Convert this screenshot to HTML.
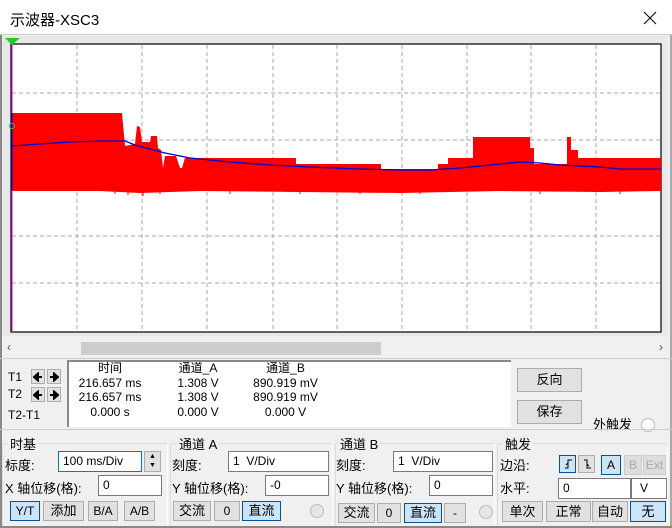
<!DOCTYPE html>
<html><head><meta charset="utf-8"><style>
*{margin:0;padding:0;box-sizing:border-box}
body{width:672px;height:528px;overflow:hidden;background:#f0f0f0;font-family:"Liberation Sans","Noto Sans CJK SC",sans-serif;font-size:12px;color:#000;position:relative}
.a{position:absolute;white-space:nowrap}
.btn{position:absolute;background:#e1e1e1;border:1px solid #adadad;text-align:center;font-size:12px}
.blue{background:#cce4f7;border:1px solid #005499}
.inp{position:absolute;background:#fff;border:1px solid #7a7a7a;padding-left:4px;font-size:12px}
.grp{position:absolute;border-top:1px solid #dcdcdc;border-left:1px solid #dcdcdc;border-right:1px solid #fff}
.rad{position:absolute;width:14px;height:14px;border-radius:50%;border:1px solid #bbb;background:#e6e6e6}
.btn svg{display:block;margin:2px auto 0}
</style></head><body>
<div class="a" style="left:0;top:0;width:672px;height:35px;background:#fff;border-bottom:1px solid #ccc"></div>
<div class="a" style="left:10px;top:9px;font-size:15px">示波器-XSC3</div>
<svg class="a" style="left:643px;top:11px" width="14" height="14"><path d="M1 1L13 13M13 1L1 13" stroke="#000" stroke-width="1"/></svg>
<div class="a" style="left:0;top:35px;width:2px;height:493px;background:#888"></div>
<div class="a" style="left:670px;top:35px;width:2px;height:493px;background:#aaa"></div>
<div class="a" style="left:2px;top:36px;width:666px;height:300px;background:#e8e8e8"></div>
<svg class="a" style="left:0;top:0" width="672" height="340">
<rect x="11" y="44" width="650" height="288" fill="#fff" stroke="#000" stroke-width="1.2"/>
<g stroke="#aaa" stroke-dasharray="4,3" stroke-width="1">
<line x1="77" y1="45" x2="77" y2="331"/><line x1="142" y1="45" x2="142" y2="331"/><line x1="207" y1="45" x2="207" y2="331"/><line x1="273" y1="45" x2="273" y2="331"/><line x1="337" y1="45" x2="337" y2="331"/><line x1="402" y1="45" x2="402" y2="331"/><line x1="467" y1="45" x2="467" y2="331"/><line x1="531" y1="45" x2="531" y2="331"/><line x1="596" y1="45" x2="596" y2="331"/>
<line x1="12" y1="93" x2="660" y2="93"/><line x1="12" y1="140" x2="660" y2="140"/><line x1="12" y1="236" x2="660" y2="236"/><line x1="12" y1="283" x2="660" y2="283"/>
</g>
<line x1="11" y1="188" x2="661" y2="188" stroke="#000" stroke-width="1"/>
<polygon fill="#f00" points="12,190 12,113 122,113 125,146 135,144 137,126 140,127 142,142 150,142 151,136 157,136 158,148 161,150 163,168 165,156 176,156 180,168 182,168 185,158 296,158 296,164 381,164 381,169 438,169 438,164 448,164 448,158 473,158 473,137 530,137 530,148 534,148 534,164 567,164 567,137 571,137 571,150 578,150 578,158 661,158 661,191 600,192 500,191 400,193 300,192 200,191 140,193 100,191 12,191"/>
<g stroke="#f00" stroke-width="1">
<line x1="115" y1="190" x2="115" y2="194"/><line x1="128" y1="190" x2="128" y2="195"/><line x1="143" y1="190" x2="143" y2="196"/><line x1="160" y1="190" x2="160" y2="194"/><line x1="230" y1="190" x2="230" y2="194"/><line x1="300" y1="190" x2="300" y2="194"/><line x1="360" y1="190" x2="360" y2="194"/><line x1="420" y1="190" x2="420" y2="194"/><line x1="540" y1="190" x2="540" y2="194"/><line x1="620" y1="190" x2="620" y2="194"/>
</g>
<polyline fill="none" stroke="#00c" stroke-width="1.3" points="12,146 40,144 70,142 100,141 125,141 135,145 150,149 165,153 190,158 230,162 270,165 310,167 360,169 400,170 430,170 460,168 490,165 520,162 540,163 560,165 600,167 620,169 661,169"/>
<line x1="12" y1="45" x2="12" y2="331" stroke="#f0f" stroke-width="1"/>
<line x1="12" y1="113" x2="12" y2="190" stroke="#00f" stroke-width="1"/>
<polygon points="5,38 20,38 12,45" fill="#2c2"/>
<circle cx="12" cy="126" r="2.5" fill="none" stroke="#2c2"/>
</svg>
<div class="a" style="left:2px;top:339px;width:668px;height:18px;background:#f0f0f0"></div>
<div class="a" style="left:81px;top:342px;width:300px;height:13px;background:#cdcdcd"></div>
<div class="a" style="left:7px;top:340px;font-size:12px;color:#555">‹</div>
<div class="a" style="left:659px;top:340px;font-size:12px;color:#555">›</div>
<div class="a" style="left:0;top:358px;width:672px;height:1px;background:#ccc"></div>
<div class="a" style="left:8px;top:370px">T1</div>
<div class="a" style="left:8px;top:387px">T2</div>
<div class="a" style="left:8px;top:408px">T2-T1</div>
<div class="btn" style="left:31px;top:369px;width:14px;height:15px"><svg width="10" height="10"><path d="M1 5H9M1 5L5 1.5V8.5Z" stroke="#000" stroke-width="2" fill="#000"/></svg></div>
<div class="btn" style="left:47px;top:369px;width:14px;height:15px"><svg width="10" height="10"><path d="M1 5H9M9 5L5 1.5V8.5Z" stroke="#000" stroke-width="2" fill="#000"/></svg></div>
<div class="btn" style="left:31px;top:387px;width:14px;height:15px"><svg width="10" height="10"><path d="M1 5H9M1 5L5 1.5V8.5Z" stroke="#000" stroke-width="2" fill="#000"/></svg></div>
<div class="btn" style="left:47px;top:387px;width:14px;height:15px"><svg width="10" height="10"><path d="M1 5H9M9 5L5 1.5V8.5Z" stroke="#000" stroke-width="2" fill="#000"/></svg></div>
<div class="a" style="left:67px;top:360px;width:444px;height:67px;background:#fff;border-top:2px solid #888;border-left:2px solid #888"></div>
<div class="a" style="left:75px;top:361px;width:70px;text-align:center;line-height:14.5px">时间<br>216.657 ms<br>216.657 ms<br>0.000 s</div>
<div class="a" style="left:163px;top:361px;width:70px;text-align:center;line-height:14.5px">通道_A<br>1.308 V<br>1.308 V<br>0.000 V</div>
<div class="a" style="left:243px;top:361px;width:85px;text-align:center;line-height:14.5px">通道_B<br>890.919 mV<br>890.919 mV<br>0.000 V</div>
<div class="btn" style="left:517px;top:368px;width:65px;height:24px;line-height:22px;font-size:13px">反向</div>
<div class="btn" style="left:517px;top:400px;width:65px;height:24px;line-height:22px;font-size:13px">保存</div>
<div class="a" style="left:593px;top:414px;font-size:13px">外触发</div>
<div class="rad" style="left:641px;top:418px;background:#fff"></div>
<div class="a" style="left:0;top:429px;width:672px;height:1px;background:#ccc"></div>
<div class="grp" style="left:2px;top:443px;width:166px;height:82px"></div>
<div class="grp" style="left:170px;top:443px;width:163px;height:82px"></div>
<div class="grp" style="left:335px;top:443px;width:160px;height:82px"></div>
<div class="grp" style="left:497px;top:443px;width:171px;height:82px"></div>
<div class="a" style="left:8px;top:434px;font-size:13px;background:#f0f0f0;padding:0 2px">时基</div>
<div class="a" style="left:177px;top:434px;font-size:13px;background:#f0f0f0;padding:0 2px">通道 A</div>
<div class="a" style="left:338px;top:434px;font-size:13px;background:#f0f0f0;padding:0 2px">通道 B</div>
<div class="a" style="left:503px;top:434px;font-size:13px;background:#f0f0f0;padding:0 2px">触发</div>
<div class="a" style="left:5px;top:455px;font-size:13px">标度:</div>
<div class="inp" style="left:58px;top:451px;width:84px;height:21px;line-height:19px;border-color:#0078d7">100 ms/Div</div>
<div class="btn" style="left:144px;top:451px;width:17px;height:21px;font-size:7px;line-height:9px">▲<br>▼</div>
<div class="a" style="left:5px;top:478px;font-size:13px">X 轴位移(格):</div>
<div class="inp" style="left:98px;top:475px;width:64px;height:21px;line-height:19px">0</div>
<div class="btn blue" style="left:10px;top:501px;width:30px;height:20px;line-height:18px">Y/T</div>
<div class="btn" style="left:43px;top:501px;width:41px;height:20px;line-height:18px;font-size:13px">添加</div>
<div class="btn" style="left:88px;top:501px;width:30px;height:20px;line-height:18px">B/A</div>
<div class="btn" style="left:124px;top:501px;width:31px;height:20px;line-height:18px">A/B</div>
<div class="a" style="left:172px;top:455px;font-size:13px">刻度:</div>
<div class="inp" style="left:228px;top:451px;width:101px;height:21px;line-height:19px">1&nbsp; V/Div</div>
<div class="a" style="left:172px;top:478px;font-size:13px">Y 轴位移(格):</div>
<div class="inp" style="left:265px;top:475px;width:64px;height:21px;line-height:19px">-0</div>
<div class="btn" style="left:173px;top:501px;width:38px;height:20px;line-height:18px;font-size:13px">交流</div>
<div class="btn" style="left:214px;top:501px;width:26px;height:20px;line-height:18px">0</div>
<div class="btn blue" style="left:242px;top:501px;width:39px;height:20px;line-height:18px;font-size:13px">直流</div>
<div class="rad" style="left:310px;top:504px"></div>
<div class="a" style="left:336px;top:455px;font-size:13px">刻度:</div>
<div class="inp" style="left:393px;top:451px;width:100px;height:21px;line-height:19px">1&nbsp; V/Div</div>
<div class="a" style="left:336px;top:478px;font-size:13px">Y 轴位移(格):</div>
<div class="inp" style="left:429px;top:475px;width:64px;height:21px;line-height:19px">0</div>
<div class="btn" style="left:338px;top:503px;width:37px;height:20px;line-height:18px;font-size:13px">交流</div>
<div class="btn" style="left:377px;top:503px;width:24px;height:20px;line-height:18px">0</div>
<div class="btn blue" style="left:404px;top:503px;width:38px;height:20px;line-height:18px;font-size:13px">直流</div>
<div class="btn" style="left:444px;top:503px;width:22px;height:20px;line-height:18px">-</div>
<div class="rad" style="left:479px;top:505px"></div>
<div class="a" style="left:500px;top:455px;font-size:13px">边沿:</div>
<div class="btn blue" style="left:559px;top:455px;width:17px;height:18px"><svg width="10" height="11"><path d="M2 10H5V2H9M5 5L3 7" stroke="#000" fill="none" stroke-width="1"/></svg></div>
<div class="btn" style="left:578px;top:455px;width:17px;height:18px"><svg width="10" height="11"><path d="M2 2H5V10H9M5 6L7 8" stroke="#000" fill="none" stroke-width="1"/></svg></div>
<div class="btn blue" style="left:601px;top:455px;width:20px;height:20px;line-height:18px">A</div>
<div class="btn" style="left:624px;top:455px;width:18px;height:20px;line-height:18px;color:#aaa;background:#ddd;border-color:#ccc">B</div>
<div class="btn" style="left:643px;top:455px;width:23px;height:20px;line-height:18px;color:#aaa;background:#ddd;border-color:#ccc">Ext</div>
<div class="a" style="left:500px;top:478px;font-size:13px">水平:</div>
<div class="inp" style="left:558px;top:478px;width:73px;height:21px;line-height:19px">0</div>
<div class="inp" style="left:631px;top:478px;width:36px;height:21px;line-height:19px;padding-left:8px">V</div>
<div class="btn" style="left:502px;top:501px;width:41px;height:21px;line-height:19px;font-size:13px">单次</div>
<div class="btn" style="left:546px;top:501px;width:45px;height:21px;line-height:19px;font-size:13px">正常</div>
<div class="btn" style="left:592px;top:501px;width:36px;height:21px;line-height:19px;font-size:13px">自动</div>
<div class="btn blue" style="left:630px;top:501px;width:36px;height:21px;line-height:19px;font-size:13px">无</div>
<div class="a" style="left:0;top:526px;width:672px;height:2px;background:#888"></div>
</body></html>
